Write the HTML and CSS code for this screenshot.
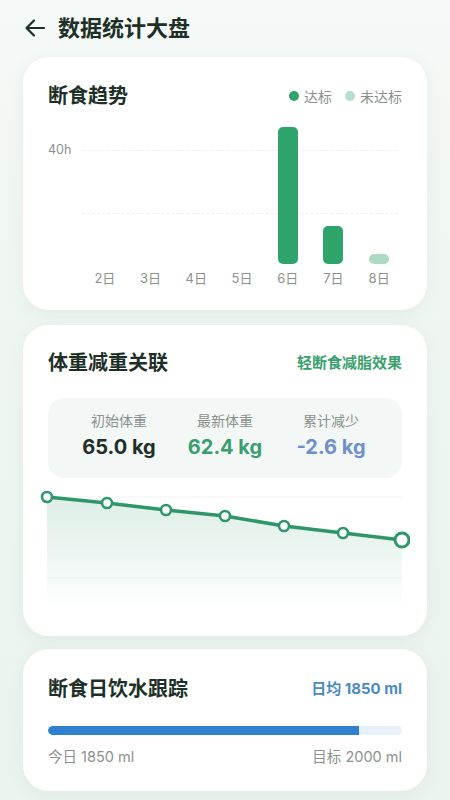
FILE: index.html
```html
<!DOCTYPE html>
<html lang="zh-CN">
<head>
<meta charset="utf-8">
<title>数据统计大盘</title>
<link rel="stylesheet" href="styles.css">
</head>
<body>
<div class="page">
  <header class="topbar">
    <svg class="back" width="22" height="20" viewBox="0 0 22 20"><path d="M20 10H3M10 2.5L2.5 10L10 17.5" fill="none" stroke="#1d2f27" stroke-width="2.2" stroke-linecap="round" stroke-linejoin="round"/></svg>
    <h1 class="title">数据统计大盘</h1>
  </header>

  <section class="card trend">
    <div class="card-head">
      <h2 class="card-title">断食趋势</h2>
      <div class="legend">
        <span class="lg"><i class="dot on"></i>达标</span>
        <span class="lg"><i class="dot off"></i>未达标</span>
      </div>
    </div>
    <div class="chart">
      <div class="yaxis"><span class="ylab">40h</span></div>
      <div class="plot">
        <div class="grid g1"></div>
        <div class="grid g2"></div>
        <div class="bars">
          <div class="col"></div>
          <div class="col"></div>
          <div class="col"></div>
          <div class="col"></div>
          <div class="col"><div class="bar on" style="height:137px"></div></div>
          <div class="col"><div class="bar on" style="height:38px"></div></div>
          <div class="col"><div class="bar off" style="height:10px"></div></div>
        </div>
      </div>
    </div>
    <div class="xlabels">
      <span>2日</span><span>3日</span><span>4日</span><span>5日</span><span>6日</span><span>7日</span><span>8日</span>
    </div>
  </section>

  <section class="card weight">
    <div class="card-head">
      <h2 class="card-title">体重减重关联</h2>
      <span class="tag green">轻断食减脂效果</span>
    </div>
    <div class="stats">
      <div class="stat"><span class="slab">初始体重</span><span class="sval dark">65.0 kg</span></div>
      <div class="stat"><span class="slab">最新体重</span><span class="sval green">62.4 kg</span></div>
      <div class="stat"><span class="slab">累计减少</span><span class="sval blue">-2.6 kg</span></div>
    </div>
    <svg class="line" width="370" height="122" viewBox="0 0 370 122">
      <defs>
        <linearGradient id="fill" x1="0" y1="0" x2="0" y2="1">
          <stop offset="0" stop-color="#2e9668" stop-opacity="0.16"/>
          <stop offset="0.75" stop-color="#2e9668" stop-opacity="0.05"/>
          <stop offset="1" stop-color="#2e9668" stop-opacity="0"/>
        </linearGradient>
      </defs>
      <line x1="7" y1="9" x2="362" y2="9" stroke="#eef2f0" stroke-width="1"/>
      <path d="M7 9L67 15L126 22L185 28L244 38L303 45L362 52V120H7Z" fill="url(#fill)"/>
      <line x1="7" y1="90" x2="362" y2="90" stroke="#e6eeea" stroke-width="1"/>
      <polyline points="7,9 67,15 126,22 185,28 244,38 303,45 362,52" fill="none" stroke="#2e9668" stroke-width="3.6" stroke-linejoin="round"/>
      <g fill="#fff" stroke="#2e9668" stroke-width="2.6">
        <circle cx="7" cy="9" r="5"/>
        <circle cx="67" cy="15" r="5"/>
        <circle cx="126" cy="22" r="5"/>
        <circle cx="185" cy="28" r="5"/>
        <circle cx="244" cy="38" r="5"/>
        <circle cx="303" cy="45" r="5"/>
        <circle cx="362" cy="52" r="7" stroke-width="3"/>
      </g>
    </svg>
  </section>

  <section class="card water">
    <div class="card-head">
      <h2 class="card-title">断食日饮水跟踪</h2>
      <span class="tag blue">日均 1850 ml</span>
    </div>
    <div class="track"><div class="fillbar" style="width:87.8%"></div></div>
    <div class="wlabels"><span>今日 1850 ml</span><span>目标 2000 ml</span></div>
  </section>
</div>
</body>
</html>
```

FILE: styles.css
```css
* { box-sizing: border-box; margin: 0; padding: 0; }
html, body { width: 450px; height: 800px; overflow: hidden; }
body {
  font-family: Inter, "Noto Sans CJK SC", "Noto Sans", sans-serif;
  background: linear-gradient(180deg, #f5f9f7 0%, #eff6f2 40%, #ebf4ef 100%);
  color: #1d2f27;
}
.page { padding: 0 23px; }

.topbar {
  height: 57px;
  display: flex;
  align-items: center;
  gap: 12px;
  padding-left: 1px;
  padding-bottom: 2px;
}
.back { display: block; }
.title { font-size: 22px; font-weight: 700; line-height: 28px; color: #1d2f27; }

.card {
  background: #fff;
  border-radius: 26px;
  box-shadow: 0 4px 18px rgba(40, 110, 75, 0.07);
  padding: 26px 25px 23px;
}
.card + .card { margin-top: 15px; }

.card-head { display: flex; justify-content: space-between; align-items: center; height: 26px; }
.card-title { font-size: 20px; font-weight: 700; line-height: 26px; color: #1d2f27; }

.legend { display: flex; gap: 13px; font-size: 14px; color: #8c918e; }
.lg { display: flex; align-items: center; gap: 5px; }
.dot { width: 10px; height: 10px; border-radius: 50%; display: block; }
.dot.on { background: #2ea46b; }
.dot.off { background: #b4dfca; }

.chart { display: flex; margin-top: 13px; }
.yaxis { width: 34px; position: relative; }
.ylab { display: block; margin-top: 19px; font-size: 12.5px; line-height: 18px; color: #8c918e; }
.plot { position: relative; width: 320px; height: 142px; }
.grid { position: absolute; left: 0; right: 4px; border-top: 1.5px dashed #eceeed; }
.g1 { top: 28px; }
.g2 { top: 91px; }
.bars { position: relative; display: grid; grid-template-columns: repeat(7, 1fr); height: 100%; align-items: end; }
.col { display: flex; justify-content: center; align-items: flex-end; height: 100%; }
.bar { width: 20px; border-radius: 5px; }
.bar.on { background: #2ea46b; }
.bar.off { background: #acdac3; }

.xlabels { display: grid; grid-template-columns: repeat(7, 1fr); margin-left: 34px; width: 320px; margin-top: 5px; font-size: 13px; line-height: 18px; color: #8c918e; text-align: center; }

.weight { padding-top: 25px; padding-bottom: 26px; }
.tag { font-size: 15px; font-weight: 700; line-height: 22px; }
.tag.green { color: #3a9f6e; font-weight: 600; }
.tag.blue { color: #4a8bbf; }

.stats {
  margin-top: 22px;
  background: #f3f7f5;
  border-radius: 16px;
  height: 80px;
  display: grid;
  grid-template-columns: 1fr 1fr 1fr;
  padding: 14px 18px 0;
}
.stat { display: flex; flex-direction: column; align-items: center; }
.slab { font-size: 14px; line-height: 18px; color: #8c918e; }
.sval { font-size: 20px; font-weight: 700; line-height: 26px; margin-top: 4px; }
.sval.dark { color: #1d2f27; }
.sval.green { color: #3a9f6e; }
.sval.blue { color: #6f8fcb; }

.line { display: block; margin: 10px -8px 0 -8px; }

.card.water { margin-top: 13px; padding-top: 27px; padding-bottom: 24px; }
.track { margin-top: 24px; height: 9px; border-radius: 5px; background: #e6f1f9; overflow: hidden; }
.fillbar { height: 100%; background: #2f80cf; border-radius: 5px 0 0 5px; }
.wlabels { display: flex; justify-content: space-between; margin-top: 12px; font-size: 14.5px; line-height: 20px; color: #8c918e; }
```
